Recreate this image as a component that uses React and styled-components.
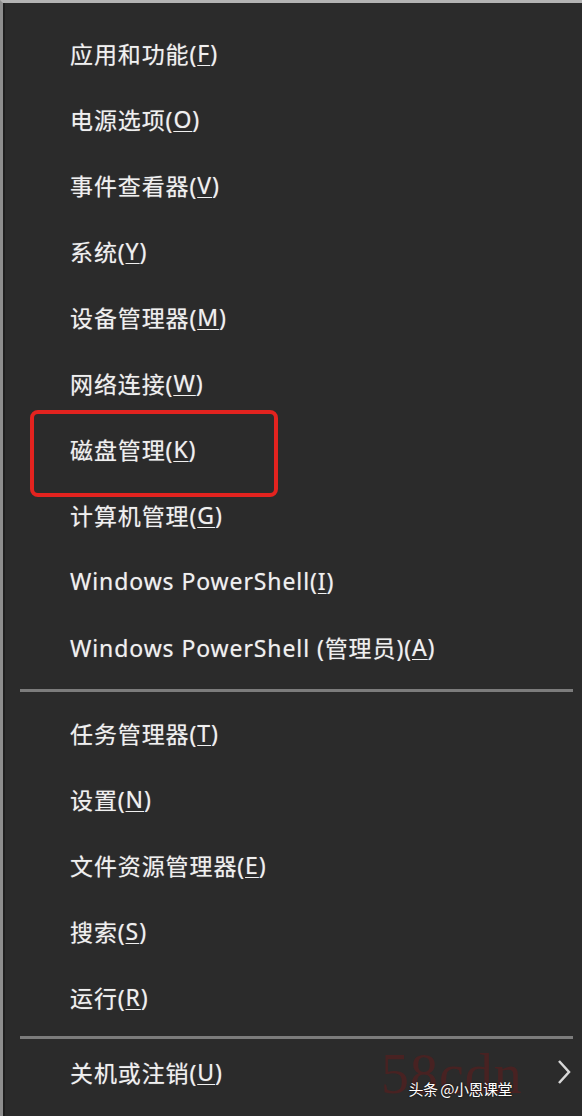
import React from "react";
import styled, { createGlobalStyle } from "styled-components";

const GlobalStyle = createGlobalStyle`
  html, body {
    margin: 0;
    padding: 0;
    background: #2b2b2b;
  }
  body {
    font-family: "Noto Sans", "Noto Sans CJK SC", sans-serif;
  }
`;

const Menu = styled.div`
  position: relative;
  box-sizing: border-box;
  width: 582px;
  height: 1116px;
  overflow: hidden;
  background: #2b2b2b;
  border-top: 3px solid #b4b4b4;
  border-left: 3px solid #8e8e8e;
  box-shadow: inset 2px 0 0 #1e1e1e;
  padding-top: 17px;
`;

const Group = styled.div`
  display: flex;
  flex-direction: column;
`;

const Item = styled.div`
  position: relative;
  display: flex;
  align-items: center;
  height: 66px;
  padding-left: 67px;
  color: #f0f0f0;
  font-family: "Noto Sans", "Noto Sans CJK SC", sans-serif;
  font-size: 23px;
  letter-spacing: 0.9px;
  text-shadow: 0 0 1px rgba(255, 255, 255, 0.45);
  white-space: nowrap;
`;

const Key = styled.span`
  text-decoration: underline;
  text-underline-offset: 3px;
  text-decoration-thickness: 1px;
`;

const Highlight = styled.div`
  position: absolute;
  box-sizing: border-box;
  left: 27px;
  top: -6px;
  width: 248px;
  height: 87px;
  border: 4px solid #e3231f;
  border-radius: 8px;
  pointer-events: none;
`;

const Separator = styled.div`
  height: 3px;
  margin: ${(p) => p.$m};
  margin-left: 17px;
  margin-right: 9px;
  background: #7c7c7c;
`;

const Chevron = styled.svg`
  position: absolute;
  right: 10px;
  top: 20px;
`;

const Watermark = styled.span`
  position: absolute;
  left: 378px;
  top: 2px;
  font-family: "Liberation Serif", serif;
  font-size: 56px;
  line-height: 66px;
  color: rgba(120, 22, 22, 0.38);
  letter-spacing: 1px;
  text-shadow: none;
`;

const Credit = styled.span`
  position: absolute;
  right: 70px;
  top: 40px;
  font-family: "Noto Sans CJK SC", sans-serif;
  font-size: 15px;
  line-height: 20px;
  color: #ffffff;
  text-shadow: 0 0 2px rgba(0, 0, 0, 0.9);
  letter-spacing: -0.5px;
`;

const top = [
  ["应用和功能(", "F", ")"],
  ["电源选项(", "O", ")"],
  ["事件查看器(", "V", ")"],
  ["系统(", "Y", ")"],
  ["设备管理器(", "M", ")"],
  ["网络连接(", "W", ")"],
  ["磁盘管理(", "K", ")"],
  ["计算机管理(", "G", ")"],
  ["Windows PowerShell(", "I", ")"],
  ["Windows PowerShell (管理员)(", "A", ")"],
];

const middle = [
  ["任务管理器(", "T", ")"],
  ["设置(", "N", ")"],
  ["文件资源管理器(", "E", ")"],
  ["搜索(", "S", ")"],
  ["运行(", "R", ")"],
];

const Label = ({ parts }) => (
  <>
    {parts[0]}
    <Key>{parts[1]}</Key>
    {parts[2]}
  </>
);

export default function App() {
  return (
    <>
      <GlobalStyle />
      <Menu>
        <Group>
          {top.map((p, i) => (
            <Item key={i}>
              <Label parts={p} />
              {p[1] === "K" && <Highlight />}
            </Item>
          ))}
        </Group>
        <Separator $m="9px 0 8px" />
        <Group>
          {middle.map((p, i) => (
            <Item key={i}>
              <Label parts={p} />
            </Item>
          ))}
        </Group>
        <Separator $m="6px 0 0" />
        <Group>
          <Item>
            <Label parts={["关机或注销(", "U", ")"]} />
            <Watermark>58cdn</Watermark>
            <Chevron width="16" height="26" viewBox="0 0 16 26">
              <path d="M3 2 L13 13 L3 24" fill="none" stroke="#d8d8d8" strokeWidth="2.5" />
            </Chevron>
            <Credit>头条 @小恩课堂</Credit>
          </Item>
        </Group>
      </Menu>
    </>
  );
}
